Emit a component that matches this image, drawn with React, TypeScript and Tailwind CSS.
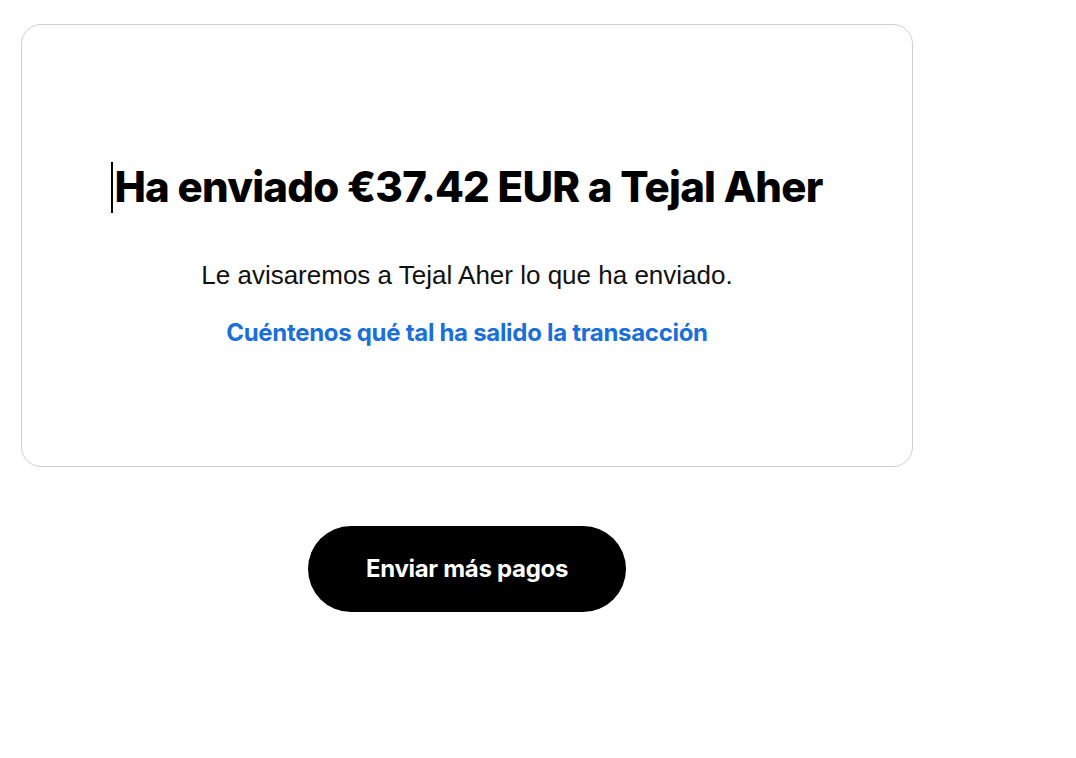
export default function App() {
  return (
    <div className="min-h-[758px] w-full bg-white pl-[21px] pt-[24px]">
      <section className="flex h-[443px] w-[892px] flex-col items-center rounded-[20px] border border-[#cfcfcf] pt-[136px]">
        <h1 className="flex items-center text-[42px] leading-[52px] font-extrabold tracking-[-0.75px] text-black [font-family:Inter,sans-serif]">
          <span className="mr-[1px] inline-block h-[51px] w-[2px] bg-black" />
          Ha enviado €37.42 EUR a Tejal Aher
        </h1>
        <p className="mt-[45px] text-[26px] leading-[34px] text-[#111] [font-family:'Liberation_Sans',Arial,sans-serif]">
          Le avisaremos a Tejal Aher lo que ha enviado.
        </p>
        <a
          href="#"
          className="mt-[25px] text-[24px] leading-[32px] font-bold tracking-[-0.3px] text-[#1a6fd8] [font-family:Inter,sans-serif]"
        >
          Cuéntenos qué tal ha salido la transacción
        </a>
      </section>
      <div className="flex w-[892px] justify-center pt-[59px]">
        <button className="h-[86px] w-[318px] rounded-full bg-black text-[24px] font-bold tracking-[-0.3px] text-white [font-family:Inter,sans-serif]">
          Enviar más pagos
        </button>
      </div>
    </div>
  );
}
